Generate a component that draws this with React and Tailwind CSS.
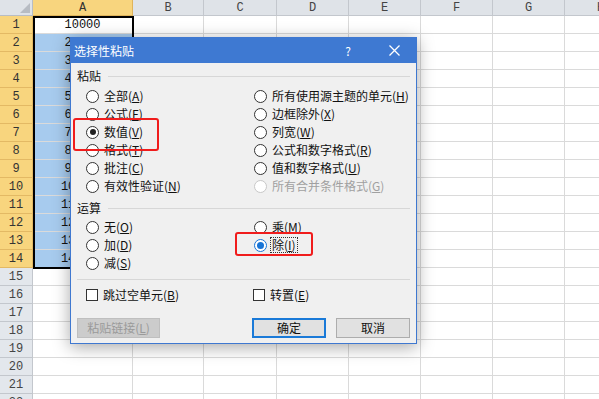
import React from 'react';

const COLS = ['A', 'B', 'C', 'D', 'E', 'F', 'G', 'H'];
const ROWS = Array.from({ length: 22 }, (_, i) => i + 1);

function Label({ text, k }) {
  return (
    <span>
      {text}(<span className="underline">{k}</span>)
    </span>
  );
}

function Radio({ checked, blue, disabled }) {
  const border = disabled ? 'border-[#c8c8c8]' : blue ? 'border-[#1874d6]' : 'border-[#333333]';
  return (
    <span className={`w-[13px] h-[13px] rounded-full border ${border} bg-white flex items-center justify-center shrink-0`}>
      {checked && !blue && <span className="w-[6px] h-[6px] rounded-full bg-[#222222]" />}
      {checked && blue && <span className="w-[7px] h-[7px] rounded-full bg-[#1874d6]" />}
    </span>
  );
}

function RadioRow({ text, k, checked, blue, disabled, focus }) {
  return (
    <div className={`h-[18px] flex items-center gap-[5px] ${disabled ? 'text-[#a0a0a0]' : 'text-[#111111]'}`}>
      <Radio checked={checked} blue={blue} disabled={disabled} />
      <span className={focus ? 'outline outline-1 outline-dotted outline-[#333] outline-offset-[1px]' : ''}>
        <Label text={text} k={k} />
      </span>
    </div>
  );
}

function Check({ text, k }) {
  return (
    <div className="h-[18px] flex items-center gap-[5px] text-[#111111]">
      <span className="w-[12px] h-[12px] border border-[#333333] bg-white shrink-0" />
      <Label text={text} k={k} />
    </div>
  );
}

function GroupLabel({ text }) {
  return (
    <div className="h-[18px] flex items-center">
      <span className="text-[#111111]">{text}</span>
      <span className="flex-1 ml-[7px] border-t border-[#d7d7d7] border-b-white" />
    </div>
  );
}

export default function App() {
  return (
    <div className="relative w-[599px] h-[399px] overflow-hidden bg-white">
      {/* Spreadsheet grid */}
      <div className="grid grid-cols-[33px_100px_71px_73px_72px_72px_72px_72px_72px] grid-rows-[16px_repeat(22,18px)] font-['Liberation_Mono',monospace] text-[12px]">
        <div className="relative bg-[#dfe3e8] border-r border-b border-[#b8bdc4]">
          <svg className="absolute right-[2px] bottom-[2px]" width="10" height="10" viewBox="0 0 10 10">
            <polygon points="10,0 10,10 0,10" fill="#b7bcc3" />
          </svg>
        </div>
        {COLS.map((c) => (
          <div
            key={c}
            className={`flex items-center justify-center border-r border-b ${c === 'A' ? 'bg-[#f8d57e] border-[#e0b45a] text-[#333]' : 'bg-[#dfe3e8] border-[#c3c7cd] text-[#444]'}`}
          >
            {c}
          </div>
        ))}
        {ROWS.map((r) => (
          <React.Fragment key={r}>
            <div
              className={`flex items-center justify-center border-r border-b ${r <= 14 ? 'bg-[#f8d57e] border-[#e3b964] text-[#333]' : 'bg-[#e3e7ec] border-[#c3c7cd] text-[#444]'}`}
            >
              {r}
            </div>
            {COLS.map((c) => (
              <div
                key={c}
                className={`flex items-center justify-center border-r border-b border-[#dadada] text-[#111] ${c === 'A' && r >= 2 && r <= 14 ? 'bg-[#a7cbee]' : 'bg-white'}`}
              >
                {c === 'A' && r <= 14 ? String(r * 10000) : ''}
              </div>
            ))}
          </React.Fragment>
        ))}
      </div>

      {/* Selection border */}
      <div className="absolute left-[33px] top-[16px] w-[101px] h-[253px] border-2 border-black" />

      {/* Dialog */}
      <div className="absolute left-[70px] top-[37px] w-[347px] h-[307px] border border-[#3f78d0] bg-[#f0f0f0] shadow-[0_3px_16px_rgba(0,0,0,0.35)] flex flex-col font-['Noto_Sans_CJK_SC',sans-serif] text-[12px] leading-none">
        <div className="h-[25px] shrink-0 bg-[#3e79d2] flex items-center pl-[3px] text-white text-[12px]">
          <span>选择性粘贴</span>
          <span className="ml-auto mr-[38px] text-[12px]">?</span>
          <svg className="mr-[16px]" width="11" height="11" viewBox="0 0 11 11">
            <path d="M0.5 0.5 L10.5 10.5 M10.5 0.5 L0.5 10.5" stroke="white" strokeWidth="1.3" />
          </svg>
        </div>
        <div className="flex-1 px-[6px] pt-[4px] flex flex-col">
          <GroupLabel text="粘贴" />
          <div className="mt-[2px] pl-[9px] grid grid-cols-[168px_1fr]">
            <div className="flex flex-col">
              <RadioRow text="全部" k="A" />
              <RadioRow text="公式" k="F" />
              <RadioRow text="数值" k="V" checked />
              <RadioRow text="格式" k="T" />
              <RadioRow text="批注" k="C" />
              <RadioRow text="有效性验证" k="N" />
            </div>
            <div className="flex flex-col">
              <RadioRow text="所有使用源主题的单元" k="H" />
              <RadioRow text="边框除外" k="X" />
              <RadioRow text="列宽" k="W" />
              <RadioRow text="公式和数字格式" k="R" />
              <RadioRow text="值和数字格式" k="U" />
              <RadioRow text="所有合并条件格式" k="G" disabled />
            </div>
          </div>
          <div className="mt-[4px]">
            <GroupLabel text="运算" />
          </div>
          <div className="mt-[1px] pl-[9px] grid grid-cols-[168px_1fr]">
            <div className="flex flex-col">
              <RadioRow text="无" k="O" />
              <RadioRow text="加" k="D" />
              <RadioRow text="减" k="S" />
            </div>
            <div className="flex flex-col">
              <RadioRow text="乘" k="M" />
              <RadioRow text="除" k="I" checked blue focus />
            </div>
          </div>
          <div className="mt-[7px] border-t border-[#d7d7d7]" />
          <div className="mt-[6px] pl-[9px] grid grid-cols-[167px_1fr]">
            <Check text="跳过空单元" k="B" />
            <Check text="转置" k="E" />
          </div>
          <div className="mt-[14px] h-[20px] flex">
            <div className="w-[83px] h-[20px] bg-[#cccccc] border border-[#bfbfbf] flex items-center justify-center text-[#9a9a9a]">
              <Label text="粘贴链接" k="L" />
            </div>
            <div className="ml-auto w-[74px] h-[20px] bg-[#e1e1e1] border-2 border-[#1a7ad8] flex items-center justify-center text-[#111]">
              确定
            </div>
            <div className="ml-[10px] w-[74px] h-[20px] bg-[#e1e1e1] border border-[#adadad] flex items-center justify-center text-[#111]">
              取消
            </div>
          </div>
        </div>
      </div>

      {/* Red highlight boxes */}
      <div className="absolute left-[73px] top-[118px] w-[86px] h-[33px] border-2 border-[#f01c1c] rounded-[3px]" />
      <div className="absolute left-[235px] top-[232px] w-[78px] h-[24px] border-2 border-[#f01c1c] rounded-[3px]" />
    </div>
  );
}
